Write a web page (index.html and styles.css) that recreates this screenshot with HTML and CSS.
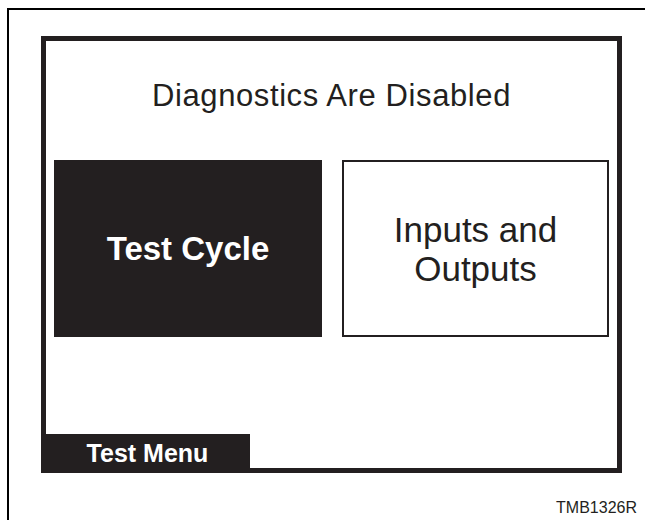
FILE: index.html
```html
<!DOCTYPE html>
<html lang="en">
<head>
    <meta charset="UTF-8">
    <meta name="viewport" content="width=device-width, initial-scale=1.0">
    <title>Test Menu</title>
    <link rel="stylesheet" href="styles.css">
</head>
<body>

<div class="figure">
    <div class="screen">
        <h1 class="screen-title">Diagnostics Are Disabled</h1>

        <div class="options">
            <div class="option option-selected">Test Cycle</div>
            <div class="option">Inputs and<br>Outputs</div>
        </div>

        <!-- menu tab sits over the bottom-left corner of the frame -->
        <div class="menu-tab">Test Menu</div>
    </div>

    <p class="figure-code">TMB1326R</p>
</div>

</body>
</html>
```

FILE: styles.css
```css
body {
    font-family: 'Liberation Sans', Arial, Helvetica, sans-serif;
    margin: 0;
    padding: 0;
    background-color: #ffffff;
    color: #231f20;
    overflow: hidden;
}

.figure {
    box-sizing: border-box;
    height: calc(100vh - 8px);
    margin: 8px 0 0 7px;
    padding: 26px 0 0 32px;
    border-top: 2px solid #000;
    border-left: 2px solid #000;
}

.screen {
    position: relative;
    box-sizing: border-box;
    width: 581px;
    height: 437px;
    border: 5px solid #231f20;
    padding: 40px 8px 0;
}

.screen-title {
    margin: 0;
    font-size: 31px;
    font-weight: normal;
    line-height: 30px;
    text-align: center;
    letter-spacing: 0.6px;
}

.options {
    display: grid;
    grid-template-columns: 268px 1fr;
    gap: 20px;
    height: 177px;
    margin-top: 49px;
}

.option {
    box-sizing: border-box;
    display: flex;
    align-items: center;
    justify-content: center;
    text-align: center;
    border: 2px solid #231f20;
    font-size: 35px;
    line-height: 39px;
}

.option-selected {
    background-color: #231f20;
    color: #fff;
    font-size: 33px;
    font-weight: bold;
}

.menu-tab {
    position: absolute;
    left: -5px;
    bottom: -5px;
    width: 209px;
    height: 39px;
    background-color: #231f20;
    color: #fff;
    font-size: 25px;
    font-weight: bold;
    line-height: 39px;
    text-align: center;
    padding-left: 4px;
    box-sizing: border-box;
}

.figure-code {
    margin: 27px 8px 0 0;
    font-size: 16px;
    line-height: 16px;
    text-align: right;
}
```
